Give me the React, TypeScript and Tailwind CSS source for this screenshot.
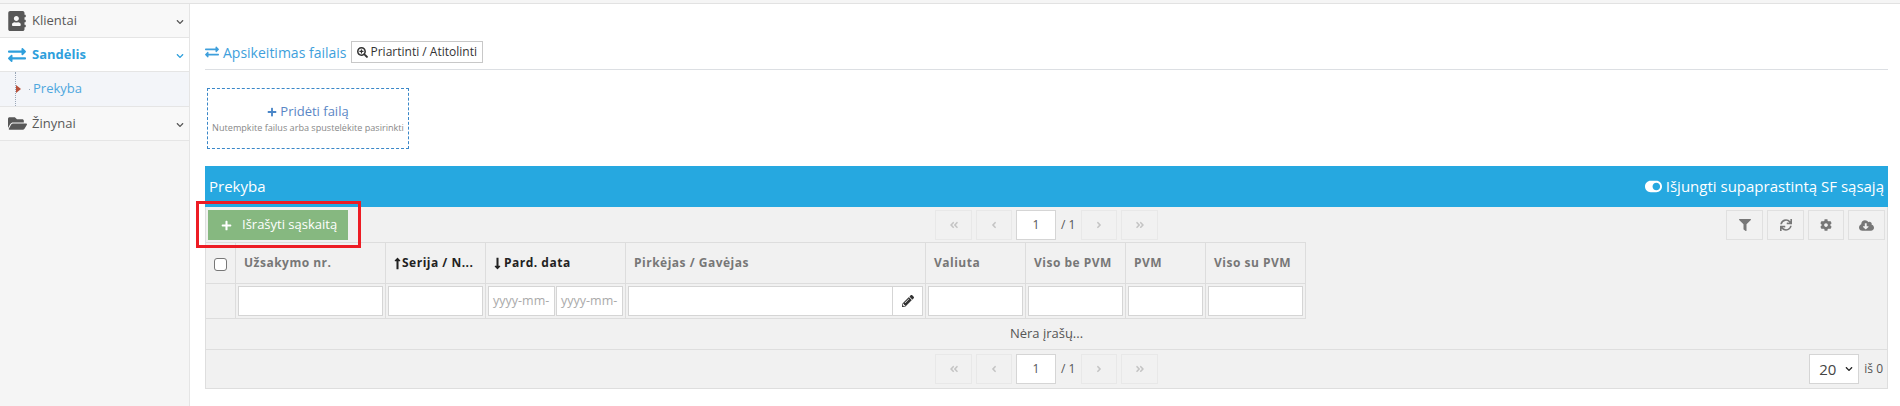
import React from 'react';
import {
  FaAddressBook,
  FaAngleDoubleLeft,
  FaAngleDoubleRight,
  FaAngleLeft,
  FaAngleRight,
  FaChevronDown,
  FaCloudDownloadAlt,
  FaCog,
  FaExchangeAlt,
  FaFilter,
  FaFolderOpen,
  FaLongArrowAltDown,
  FaLongArrowAltUp,
  FaPencilAlt,
  FaPlus,
  FaSearchPlus,
  FaSync,
  FaToggleOn,
} from 'react-icons/fa';

const font = 'font-["Open_Sans",sans-serif]';

function SideItem({ icon, label, active }: { icon: React.ReactNode; label: string; active?: boolean }) {
  return (
    <div
      className={`flex h-[34px] items-center border-b border-[#e5e5e5] pl-[8px] pr-[5px] ${
        active ? 'bg-white text-[#2e9fdc]' : 'bg-[#f8f8f8] text-[#585858]'
      }`}
    >
      <span className="flex w-[24px] shrink-0 items-center">{icon}</span>
      <span className={`flex-1 text-[13px] ${active ? 'font-bold' : ''}`}>{label}</span>
      <FaChevronDown className="mt-[3px] h-[8px] w-[8px]" />
    </div>
  );
}

function Pager() {
  const btn = 'flex h-[30px] items-center justify-center border border-[#e8e8e8] text-[#c4c4c4]';
  return (
    <div className="flex items-center gap-[4px]">
      <div className={`${btn} w-[37px]`}><FaAngleDoubleLeft className="h-[10px] w-[10px]" /></div>
      <div className={`${btn} w-[36px]`}><FaAngleLeft className="h-[10px] w-[10px]" /></div>
      <div className="flex h-[30px] w-[40px] items-center justify-center border border-[#d5d5d5] bg-white text-[12px] text-[#555]">1</div>
      <span className="w-[17px] whitespace-nowrap pl-[1px] text-[12px] text-[#555]">/ 1</span>
      <div className={`${btn} w-[36px]`}><FaAngleRight className="h-[10px] w-[10px]" /></div>
      <div className={`${btn} w-[37px]`}><FaAngleDoubleRight className="h-[10px] w-[10px]" /></div>
    </div>
  );
}

function ToolBtn({ children, w }: { children: React.ReactNode; w: string }) {
  return (
    <div className={`flex h-[30px] ${w} items-center justify-center border border-[#e0e0e0] text-[#777]`}>
      {children}
    </div>
  );
}

function Th({ children, dark }: { children: React.ReactNode; dark?: boolean }) {
  return (
    <div
      className={`flex h-[41px] items-center gap-[1px] overflow-hidden whitespace-nowrap border-b border-r border-[#ddd] pl-[8px] text-[12px] font-bold tracking-[0.5px] ${
        dark ? 'text-[#222]' : 'text-[#777]'
      }`}
    >
      {children}
    </div>
  );
}

function FilterCell({ children }: { children?: React.ReactNode }) {
  return (
    <div className="flex h-[35px] gap-[1px] border-b border-r border-[#ddd] p-[2px]">
      {children ?? <div className="h-[30px] flex-1 border border-[#d5d5d5] bg-white" />}
    </div>
  );
}

export default function App() {
  return (
    <div className={`${font} flex h-[406px] w-[1900px] flex-col overflow-hidden bg-white`}>
      <div className="h-[4px] shrink-0 border-b border-[#e2e2e2] bg-[#f5f5f5]" />
      <div className="flex flex-1">
        <aside className="w-[190px] shrink-0 border-r border-[#e5e5e5] bg-[#f5f5f5]">
          <SideItem icon={<FaAddressBook className="h-[20px] w-[18px] text-[#585858]" />} label="Klientai" />
          <SideItem icon={<FaExchangeAlt className="h-[18px] w-[18px]" />} label="Sandėlis" active />
          <div className="relative flex h-[35px] items-center border-b border-[#e5e5e5] bg-[#f3f5f9] pl-[33px] text-[13px] text-[#4ea7de]">
            <span className="absolute left-[15px] top-0 h-full border-l border-dotted border-[#9aa7b8]" />
            <span className="absolute left-[16px] top-[13px] h-0 w-0 border-y-[4px] border-l-[5px] border-y-transparent border-l-[#b8503a]" />
            <span className="absolute left-[29px] top-[17px] h-[1px] w-[1px] bg-[#9aa7b8]" />
            Prekyba
          </div>
          <SideItem icon={<FaFolderOpen className="h-[17px] w-[19px] text-[#585858]" />} label="Žinynai" />
        </aside>

        <main className="min-w-0 flex-1 pl-[15px] pr-[12px]">
          <div className="flex h-[66px] items-end gap-[4px] border-b border-[#dcdfe3] pb-[6px]">
            <span className="flex h-[22px] items-center gap-[4px] text-[14px] text-[#3e9fdc]">
              <FaExchangeAlt className="h-[14px] w-[14px]" />
              Apsikeitimas failais
            </span>
            <span className="flex h-[22px] items-center gap-[3px] border border-[#c8c8c8] px-[5px] text-[12px] text-[#333]">
              <FaSearchPlus className="h-[11px] w-[11px]" />
              Priartinti / Atitolinti
            </span>
          </div>

          <div className="ml-[2px] mt-[18px] flex h-[61px] w-[202px] flex-col items-center justify-center border border-dashed border-[#3a87c8]">
            <span className="flex items-center gap-[3px] text-[13px] text-[#5a86c5]">
              <FaPlus className="h-[10px] w-[10px] text-[#4a86c8]" />
              Pridėti failą
            </span>
            <span className="whitespace-nowrap text-[9.1px] text-[#888]">Nutempkite failus arba spustelėkite pasirinkti</span>
          </div>

          <section className="relative mt-[17px]">
            <div className="flex h-[41px] items-center justify-between bg-[#26a8e0] pl-[4px] pr-[4px] text-white">
              <span className="text-[15px]">Prekyba</span>
              <span className="flex items-center gap-[4px] text-[15px]">
                <FaToggleOn className="h-[17px] w-[17px]" />
                Išjungti supaprastintą SF sąsają
              </span>
            </div>

            <div className="border-x border-b border-[#dedede] bg-[#f1f1f1]">
              <div className="grid h-[35px] grid-cols-[1fr_auto_1fr] items-start pt-[3px]">
                <div className="pl-[2px]">
                  <div className="flex h-[30px] w-[140px] items-center gap-[10px] bg-[#86b880] pl-[13px] text-[13px] text-white">
                    <FaPlus className="h-[11px] w-[11px]" />
                    Išrašyti sąskaitą
                  </div>
                </div>
                <Pager />
                <div className="flex justify-end gap-[4px] pr-[2px]">
                  <ToolBtn w="w-[37px]"><FaFilter className="h-[12px] w-[12px]" /></ToolBtn>
                  <ToolBtn w="w-[37px]"><FaSync className="h-[12px] w-[12px]" /></ToolBtn>
                  <ToolBtn w="w-[36px]"><FaCog className="h-[12px] w-[12px]" /></ToolBtn>
                  <ToolBtn w="w-[37px]"><FaCloudDownloadAlt className="h-[15px] w-[15px]" /></ToolBtn>
                </div>
              </div>

              <div className="grid w-[1100px] grid-cols-[30px_150px_100px_140px_300px_100px_100px_80px_100px] border-t border-[#ddd]">
                <div className="flex h-[41px] items-center justify-center border-b border-r border-[#ddd]">
                  <span className="mt-[3px] h-[13px] w-[13px] rounded-[3px] border border-[#777] bg-white" />
                </div>
                <Th>Užsakymo nr.</Th>
                <Th dark><FaLongArrowAltUp className="h-[13px] w-[7px] shrink-0" />Serija / N...</Th>
                <Th dark><FaLongArrowAltDown className="mr-[2px] h-[13px] w-[7px] shrink-0" />Pard. data</Th>
                <Th>Pirkėjas / Gavėjas</Th>
                <Th>Valiuta</Th>
                <Th>Viso be PVM</Th>
                <Th>PVM</Th>
                <Th>Viso su PVM</Th>

                <div className="h-[35px] border-b border-r border-[#ddd]" />
                <FilterCell />
                <FilterCell />
                <FilterCell>
                  <div className="flex h-[30px] flex-1 items-center overflow-hidden whitespace-nowrap border border-[#d5d5d5] bg-white pl-[4px] text-[12.5px] text-[#aaa]">yyyy-mm-</div>
                  <div className="flex h-[30px] flex-1 items-center overflow-hidden whitespace-nowrap border border-[#d5d5d5] bg-white pl-[4px] text-[12.5px] text-[#aaa]">yyyy-mm-</div>
                </FilterCell>
                <FilterCell>
                  <div className="flex flex-1">
                    <div className="h-[30px] flex-1 border border-[#d5d5d5] bg-white" />
                    <div className="flex h-[30px] w-[30px] items-center justify-center border border-l-0 border-[#d5d5d5] bg-white text-[#333]">
                      <FaPencilAlt className="h-[12px] w-[12px]" />
                    </div>
                  </div>
                </FilterCell>
                <FilterCell />
                <FilterCell />
                <FilterCell />
                <FilterCell />
              </div>

              <div className="flex h-[31px] items-center justify-center border-b border-[#dedede] text-[13px] text-[#555]">
                Nėra įrašų...
              </div>

              <div className="grid h-[38px] grid-cols-[1fr_auto_1fr] items-start pt-[4px]">
                <div />
                <Pager />
                <div className="flex items-center justify-end gap-[5px] pr-[4px]">
                  <div className="flex h-[30px] w-[50px] items-center gap-[8px] border border-[#d5d5d5] bg-white pl-[9px] text-[15px] text-[#444]">
                    20
                    <FaChevronDown className="h-[8px] w-[10px] text-[#222]" />
                  </div>
                  <span className="text-[12px] text-[#555]">iš 0</span>
                </div>
              </div>
            </div>

            {/* red annotation round the button */}
            <div className="pointer-events-none absolute left-[-9px] top-[35px] h-[47px] w-[165px] border-[3px] border-[#ed1c24]" />
          </section>
        </main>
      </div>
    </div>
  );
}
